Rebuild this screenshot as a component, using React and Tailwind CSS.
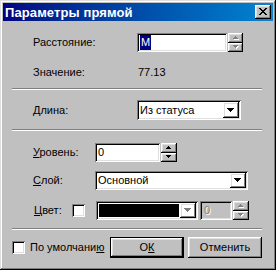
import React from "react";

// Win98 bevels
const raised =
  "shadow-[inset_-1px_-1px_#000000,inset_1px_1px_#ffffff,inset_-2px_-2px_#808080,inset_2px_2px_#dfdfdf]";
const sunken =
  "shadow-[inset_1px_1px_#808080,inset_-1px_-1px_#ffffff,inset_2px_2px_#000000,inset_-2px_-2px_#dfdfdf]";

// pixel triangle, w = base width in px
function Tri({ dir = "down", w = 7, color = "#000000", disabled = false }) {
  const rows = Math.ceil(w / 2);
  const rects = [];
  for (let i = 0; i < rows; i++) {
    const width = dir === "down" ? w - i * 2 : 1 + i * 2;
    const x = (w - width) / 2;
    rects.push({ x, y: i, width });
  }
  const fill = disabled ? "#808080" : color;
  return (
    <svg width={w + 1} height={rows + 1} shapeRendering="crispEdges">
      {disabled &&
        rects.map((r, i) => (
          <rect key={"s" + i} x={r.x + 1} y={r.y + 1} width={r.width} height={1} fill="#ffffff" />
        ))}
      {rects.map((r, i) => (
        <rect key={i} x={r.x} y={r.y} width={r.width} height={1} fill={fill} />
      ))}
    </svg>
  );
}

function Spin({ disabled, w = 15 }) {
  return (
    <div className="flex flex-col h-full" style={{ width: w }}>
      <div className={`flex-1 flex items-center justify-center ${raised}`}>
        <Tri dir="up" w={5} disabled={disabled} />
      </div>
      <div className={`flex-1 flex items-center justify-center ${raised}`}>
        <Tri dir="down" w={5} disabled={disabled} />
      </div>
    </div>
  );
}

function DropBtn({ disabled }) {
  return (
    <div className={`w-[16px] h-full flex items-center justify-center ${raised}`}>
      <Tri dir="down" w={7} disabled={disabled} />
    </div>
  );
}

function Select({ value, className }) {
  return (
    <div className={`h-full flex bg-white p-[2px] ${sunken} ${className}`}>
      <div className="flex-1 flex items-center pl-[1px] text-black">{value}</div>
      <DropBtn />
    </div>
  );
}

function Check({ className = "" }) {
  return <div className={`w-[13px] h-[13px] bg-white ${sunken} ${className}`} />;
}

function Separator({ className = "" }) {
  return (
    <div className={`ml-[9px] w-[250px] border-t border-t-[#808080] border-b border-b-white ${className}`} />
  );
}

export default function App() {
  return (
    <div
      className="w-[276px] h-[270px] bg-[#c0c0c0] p-[3px] flex flex-col text-[11px] leading-none text-black shadow-[inset_-1px_-1px_#000000,inset_1px_1px_#dfdfdf,inset_-2px_-2px_#808080,inset_2px_2px_#ffffff]"
      style={{ fontFamily: '"Liberation Sans", Arial, sans-serif' }}
    >
      {/* Title bar */}
      <div className="h-[18px] flex items-center justify-between bg-linear-to-r from-[#000080] to-[#1084d0] pl-[2px] pr-[2px]">
        <span className="text-white font-bold text-[13px] tracking-[0.1px]">Параметры прямой</span>
        <div className={`w-[16px] h-[14px] bg-[#c0c0c0] flex items-center justify-center ${raised}`}>
          <svg width="8" height="7" shapeRendering="crispEdges" className="-mt-[1px] -ml-[1px]">
            {[0, 1, 2, 3, 4, 5, 6].map((i) => (
              <g key={i}>
                <rect x={i} y={i} width={2} height={1} fill="#000" />
                <rect x={6 - i} y={i} width={2} height={1} fill="#000" />
              </g>
            ))}
          </svg>
        </div>
      </div>

      {/* Расстояние */}
      <div className="mt-[12px] h-[19px] flex items-center pl-[30px]">
        <span className="w-[104px]">Расстояние:</span>
        <div className={`w-[90px] h-full bg-white flex items-center pl-[3px] ${sunken}`}>
          <span className="bg-[#000080] text-white h-[15px] px-[1px] flex items-center">M</span>
        </div>
        <div className="ml-[1px] h-full">
          <Spin disabled />
        </div>
      </div>

      {/* Значение */}
      <div className="mt-[12px] h-[16px] flex items-center pl-[30px]">
        <span className="w-[105px]">Значение:</span>
        <span>77.13</span>
      </div>

      <Separator className="mt-[8px]" />

      {/* Длина */}
      <div className="mt-[10px] h-[20px] flex items-center pl-[30px]">
        <span className="w-[104px]">Длина:</span>
        <Select value="Из статуса" className="w-[104px]" />
      </div>

      <Separator className="mt-[9px]" />

      {/* Уровень */}
      <div className="mt-[12px] h-[19px] flex items-center pl-[30px]">
        <span className="w-[62px]">
          <u>У</u>ровень:
        </span>
        <div className={`w-[65px] h-full bg-white flex items-center pl-[3px] ${sunken}`}>0</div>
        <div className="ml-[1px] h-full">
          <Spin w={16} />
        </div>
      </div>

      {/* Слой */}
      <div className="mt-[9px] h-[19px] flex items-center pl-[30px]">
        <span className="w-[62px]">
          <u>С</u>лой:
        </span>
        <Select value="Основной" className="w-[153px]" />
      </div>

      {/* Цвет */}
      <div className="mt-[11px] h-[19px] flex items-center pl-[31px]">
        <span className="w-[38px]">
          <u>Ц</u>вет:
        </span>
        <Check />
        <div className={`ml-[11px] w-[102px] h-full flex bg-white p-[2px] ${sunken}`}>
          <div className="flex-1 p-[1px]">
            <div className="w-full h-full bg-black" />
          </div>
          <DropBtn disabled />
        </div>
        <div className={`ml-[2px] w-[32px] h-full flex items-center pl-[4px] ${sunken}`}>
          <span className="text-[#808080] [text-shadow:1px_1px_0_#ffffff]">0</span>
        </div>
        <div className="ml-[1px] h-full">
          <Spin disabled w={16} />
        </div>
      </div>

      <Separator className="mt-[8px]" />

      {/* Bottom row */}
      <div className="mt-[7px] h-[21px] flex items-center pl-[9px]">
        <Check />
        <span className="ml-[5px] w-[80px]">
          По умолчани<u>ю</u>
        </span>
        <div className="w-[74px] h-full border border-black">
          <div className={`w-full h-full flex items-center justify-center ${raised}`}>
            О<u>К</u>
          </div>
        </div>
        <div className={`ml-[4px] w-[74px] h-full flex items-center justify-center ${raised}`}>
          Отменить
        </div>
      </div>
    </div>
  );
}
